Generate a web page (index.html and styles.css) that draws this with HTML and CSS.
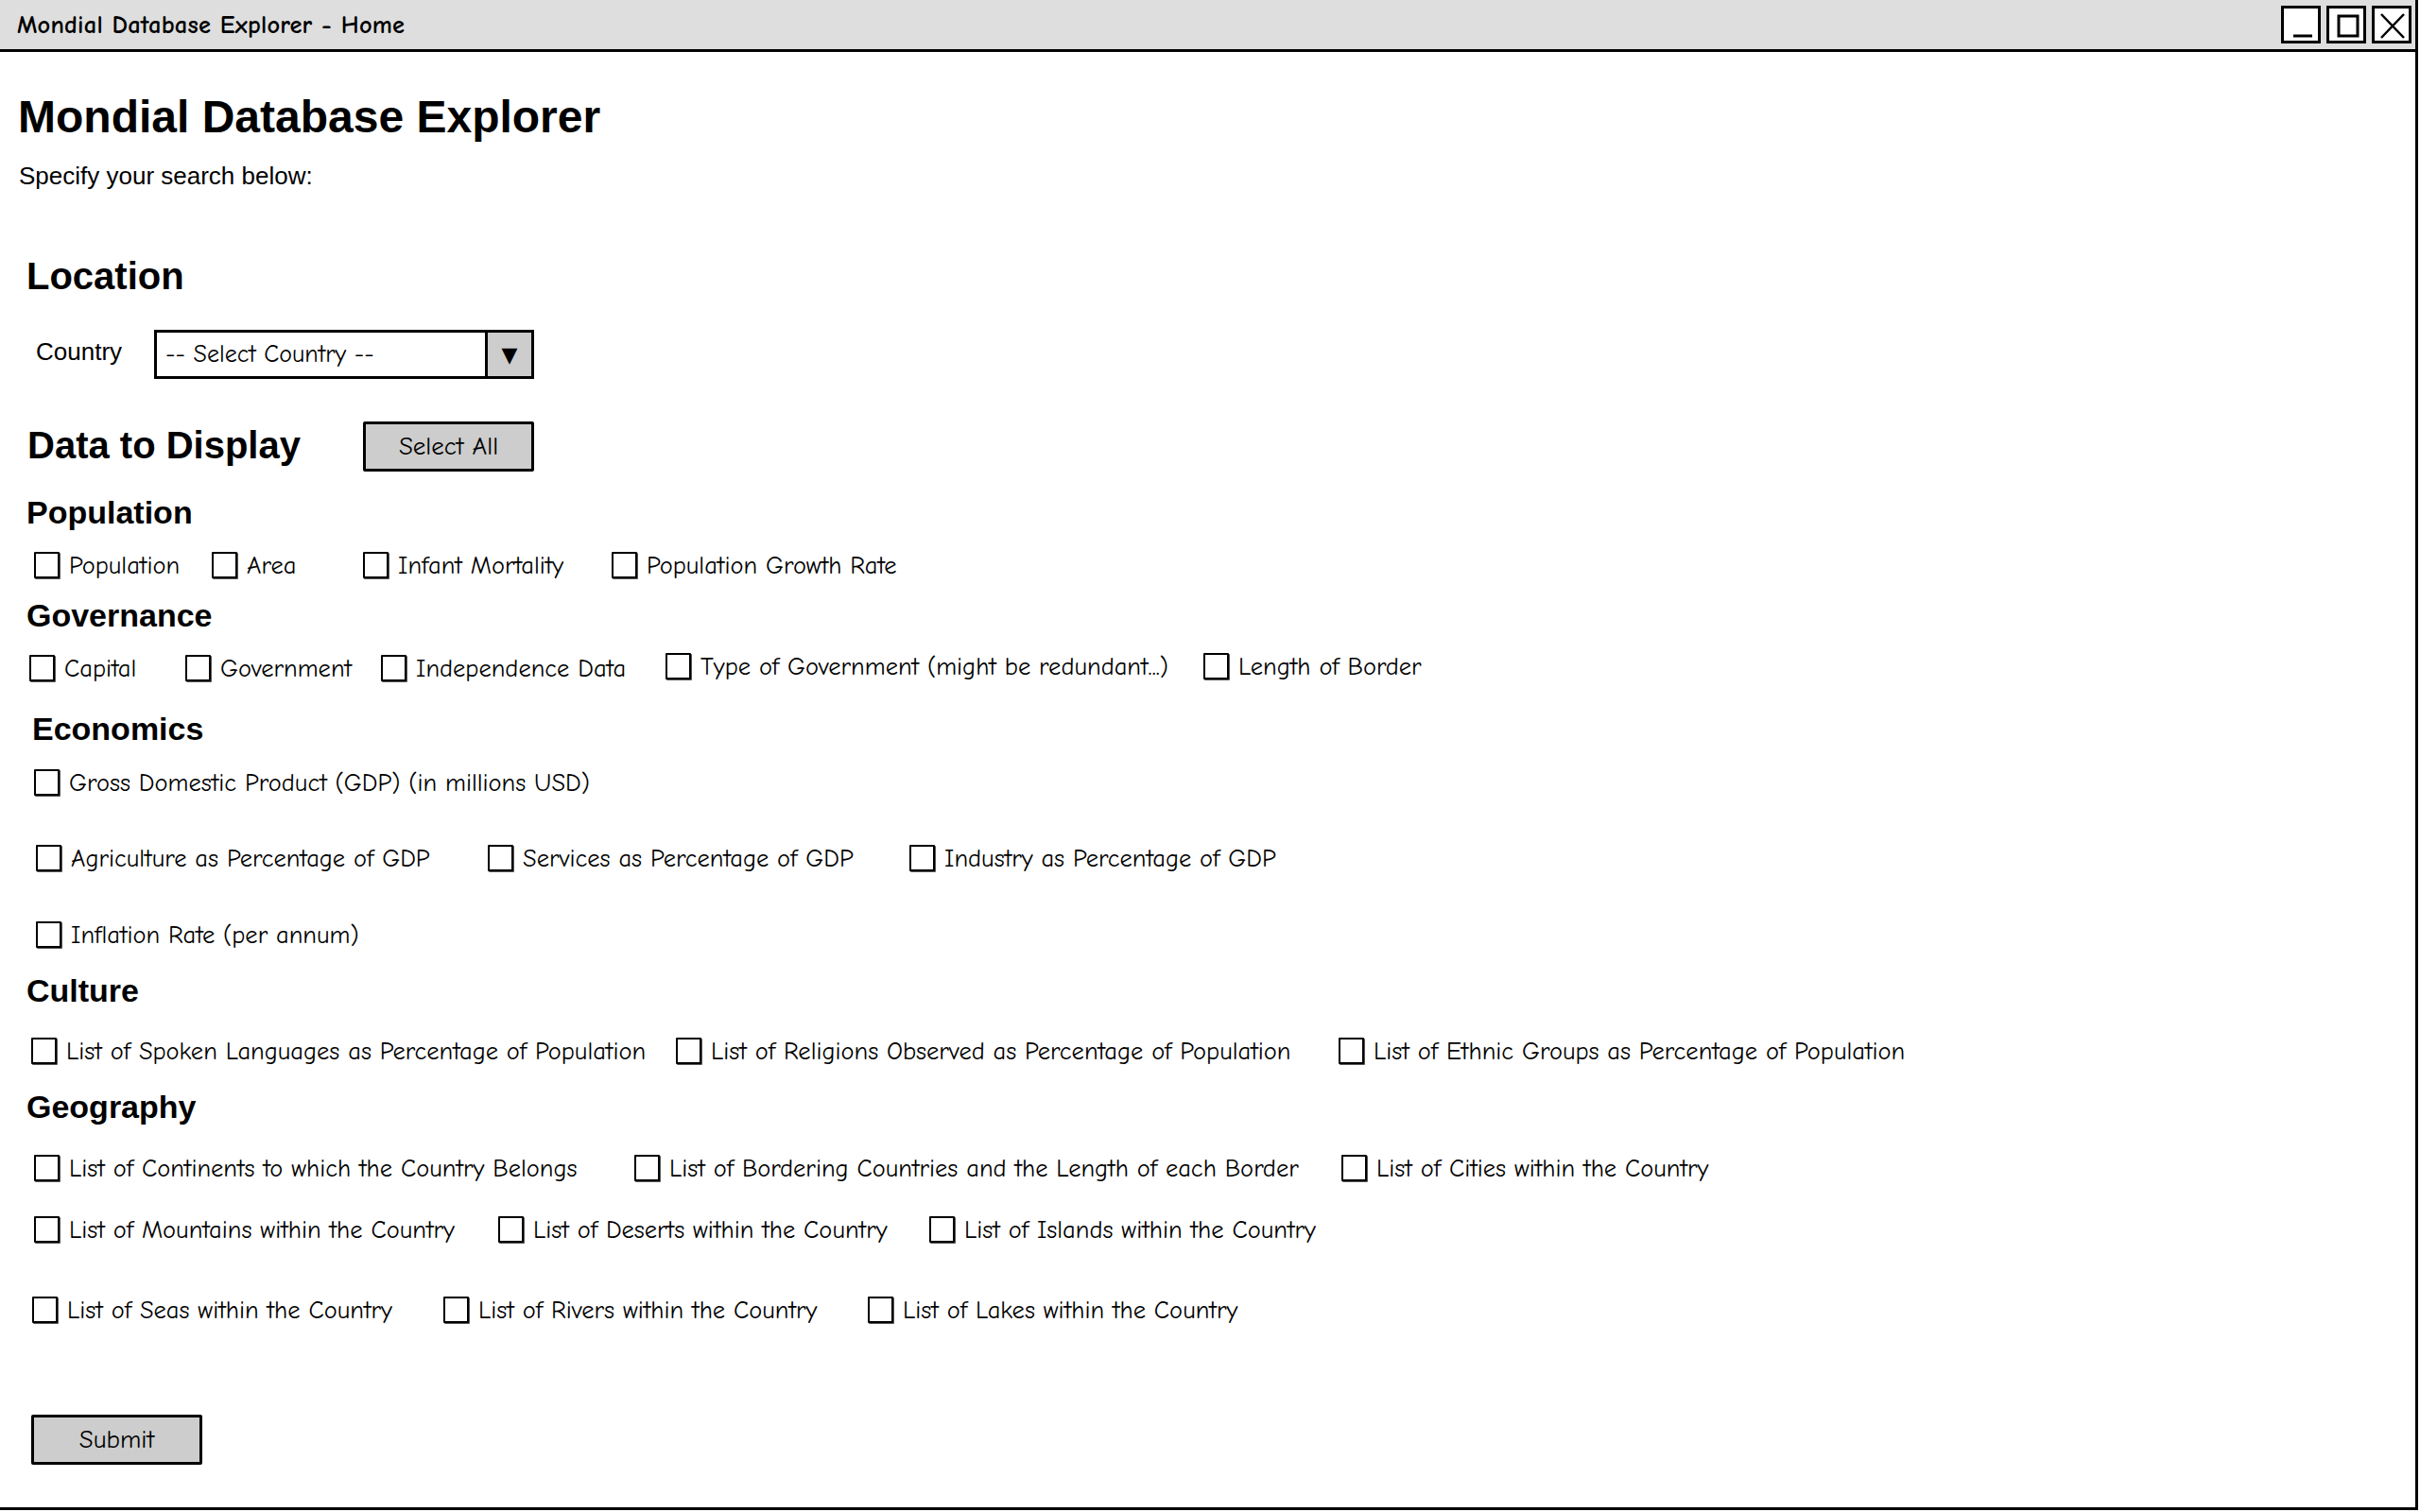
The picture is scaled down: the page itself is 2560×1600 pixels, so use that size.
FILE: index.html
```html
<!DOCTYPE html>
<html lang="en">
<head>
<meta charset="utf-8">
<title>Mondial Database Explorer - Home</title>
<link rel="stylesheet" href="styles.css">
</head>
<body>
<div class="window">
  <header class="titlebar">
    <span class="title">Mondial Database Explorer - Home</span>
    <div class="controls">
      <span class="ctl"><svg width="36" height="34" viewBox="0 0 36 34"><line x1="10" y1="29" x2="30" y2="29" stroke="#000" stroke-width="3"/></svg></span>
      <span class="ctl"><svg width="36" height="34" viewBox="0 0 36 34"><rect x="10" y="8" width="20" height="21" fill="none" stroke="#000" stroke-width="3"/></svg></span>
      <span class="ctl"><svg width="36" height="34" viewBox="0 0 36 34"><path d="M7 6 L31 31 M31 6 L7 31" stroke="#000" stroke-width="2.5" fill="none"/></svg></span>
    </div>
  </header>
  <main class="content">
    <h1 class="page-title">Mondial Database Explorer</h1>
    <p class="intro">Specify your search below:</p>

    <h2 class="section loc">Location</h2>
    <div class="country-row">
      <span class="field-label">Country</span>
      <div class="select">
        <span class="select-text">-- Select Country --</span>
        <span class="select-arrow">▼</span>
      </div>
    </div>

    <div class="data-row">
      <h2 class="section">Data to Display</h2>
      <button class="btn select-all">Select All</button>
    </div>

    <h3 class="cat m-pop">Population</h3>
    <div class="opts r-pop">
      <label class="opt"><span class="cb"></span>Population</label>
      <label class="opt"><span class="cb"></span>Area</label>
      <label class="opt"><span class="cb"></span>Infant Mortality</label>
      <label class="opt"><span class="cb"></span>Population Growth Rate</label>
    </div>

    <h3 class="cat m-gov">Governance</h3>
    <div class="opts r-gov">
      <label class="opt"><span class="cb"></span>Capital</label>
      <label class="opt"><span class="cb"></span>Government</label>
      <label class="opt"><span class="cb"></span>Independence Data</label>
      <label class="opt up"><span class="cb"></span>Type of Government (might be redundant...)</label>
      <label class="opt up"><span class="cb"></span>Length of Border</label>
    </div>

    <h3 class="cat econ m-econ">Economics</h3>
    <div class="opts r-gdp">
      <label class="opt"><span class="cb"></span>Gross Domestic Product (GDP) (in millions USD)</label>
    </div>
    <div class="opts r-agri">
      <label class="opt"><span class="cb"></span>Agriculture as Percentage of GDP</label>
      <label class="opt"><span class="cb"></span>Services as Percentage of GDP</label>
      <label class="opt"><span class="cb"></span>Industry as Percentage of GDP</label>
    </div>
    <div class="opts r-infl">
      <label class="opt"><span class="cb"></span>Inflation Rate (per annum)</label>
    </div>

    <h3 class="cat m-cult">Culture</h3>
    <div class="opts r-cult">
      <label class="opt"><span class="cb"></span>List of Spoken Languages as Percentage of Population</label>
      <label class="opt"><span class="cb"></span>List of Religions Observed as Percentage of Population</label>
      <label class="opt"><span class="cb"></span>List of Ethnic Groups as Percentage of Population</label>
    </div>

    <h3 class="cat m-geo">Geography</h3>
    <div class="opts r-geo1">
      <label class="opt"><span class="cb"></span>List of Continents to which the Country Belongs</label>
      <label class="opt"><span class="cb"></span>List of Bordering Countries and the Length of each Border</label>
      <label class="opt"><span class="cb"></span>List of Cities within the Country</label>
    </div>
    <div class="opts r-geo2">
      <label class="opt"><span class="cb"></span>List of Mountains within the Country</label>
      <label class="opt"><span class="cb"></span>List of Deserts within the Country</label>
      <label class="opt"><span class="cb"></span>List of Islands within the Country</label>
    </div>
    <div class="opts r-geo3">
      <label class="opt"><span class="cb"></span>List of Seas within the Country</label>
      <label class="opt"><span class="cb"></span>List of Rivers within the Country</label>
      <label class="opt"><span class="cb"></span>List of Lakes within the Country</label>
    </div>

    <div class="submit-row">
      <button class="btn submit">Submit</button>
    </div>
  </main>
</div>
</body>
</html>
```
FILE: styles.css
```css
:root {
  --hand: "Comic Sans MS", "Comic Neue", "Liberation Sans Narrow", "DejaVu Sans Condensed", sans-serif;
  --plain: "Liberation Sans", Arial, sans-serif;
}
* { box-sizing: border-box; }
html, body { margin: 0; padding: 0; background: #fff; }
body { width: 2560px; height: 1600px; overflow: hidden; color: #000; }

.window {
  width: 2558px;
  height: 1598px;
  border-right: 3px solid #000;
  border-bottom: 3px solid #000;
  display: flex;
  flex-direction: column;
}

.titlebar {
  height: 55px;
  flex: none;
  background: #dedede;
  border-bottom: 3px solid #000;
  display: flex;
  align-items: center;
  justify-content: space-between;
  padding: 0 4px 0 18px;
}
.title {
  font-family: var(--hand);
  font-weight: bold;
  font-size: 26.5px;
  letter-spacing: 0.2px;
}
.controls { display: flex; gap: 6px; align-self: flex-start; padding-top: 6px; }
.ctl {
  width: 42px;
  height: 40px;
  border: 3px solid #000;
  background: #fff;
  display: flex;
  align-items: center;
  justify-content: center;
}
.ctl svg { display: block; }

.content { display: flex; flex-direction: column; }

.page-title {
  margin: 39px 0 0;
  height: 60px;
  line-height: 60px;
  padding-left: 19px;
  font-family: var(--plain);
  font-weight: bold;
  font-size: 48px;
}
.intro {
  margin: 14px 0 0;
  height: 36px;
  line-height: 36px;
  padding-left: 20px;
  font-family: var(--plain);
  font-size: 26px;
}

.section {
  margin: 0;
  font-family: var(--plain);
  font-weight: bold;
  font-size: 40px;
  line-height: 50px;
}
.loc { margin-top: 63px; height: 50px; padding-left: 28px; }

.country-row {
  margin-top: 32px;
  height: 52px;
  display: flex;
  align-items: center;
  padding-left: 38px;
}
.field-label {
  font-family: var(--plain);
  font-size: 26px;
  width: 125px;
  position: relative;
  top: -3px;
}
.select {
  width: 402px;
  height: 52px;
  border: 3px solid #000;
  display: flex;
  align-items: stretch;
  background: #fff;
}
.select-text {
  flex: 1;
  display: flex;
  align-items: center;
  padding-left: 9px;
  font-family: var(--hand);
  font-size: 26px;
}
.select-arrow {
  width: 49px;
  border-left: 3px solid #000;
  background: #cdcdcd;
  display: flex;
  align-items: center;
  justify-content: center;
  font-size: 22px;
  font-family: "DejaVu Sans", sans-serif;
}

.data-row {
  margin-top: 45px;
  height: 52px;
  display: flex;
  align-items: center;
  padding-left: 29px;
}
.data-row .section { width: 355px; position: relative; top: -1px; }

.btn {
  font-family: var(--hand);
  font-size: 27px;
  color: #000;
  background: #cdcdcd;
  border: 3px solid #000;
  border-radius: 2px;
  padding: 0;
  width: 181px;
  height: 53px;
}

.cat {
  margin: 0;
  height: 40px;
  line-height: 40px;
  padding-left: 28px;
  font-family: var(--plain);
  font-weight: bold;
  font-size: 34px;
}
.cat.econ { padding-left: 34px; }
.m-pop { margin-top: 24px; }
.m-gov { margin-top: 13px; }
.m-econ { margin-top: 24px; }
.m-cult { margin-top: 19px; }
.m-geo { margin-top: 19px; }

.opts {
  display: grid;
  height: 40px;
  align-items: center;
}
.opt {
  display: flex;
  align-items: center;
  gap: 10px;
  font-family: var(--hand);
  font-size: 26.5px;
  white-space: nowrap;
}
.opt.up { position: relative; top: -2px; }
.cb {
  width: 27px;
  height: 28px;
  border: 2px solid #000;
  border-radius: 1px;
  background: #fff;
  box-shadow: 1px 1px 0 #555;
  flex: none;
}

.r-pop { margin-top: 16px; padding-left: 36px; grid-template-columns: 188px 160px 263px auto; }
.r-gov { margin-top: 16px; padding-left: 31px; grid-template-columns: 165px 207px 301px 569px auto; }
.r-gdp { margin-top: 17px; padding-left: 36px; grid-template-columns: auto; }
.r-agri { margin-top: 40px; padding-left: 38px; grid-template-columns: 478px 446px auto; }
.r-infl { margin-top: 41px; padding-left: 38px; grid-template-columns: auto; }
.r-cult { margin-top: 24px; padding-left: 33px; grid-template-columns: 682px 701px auto; }
.r-geo1 { margin-top: 25px; padding-left: 36px; grid-template-columns: 635px 748px auto; }
.r-geo2 { margin-top: 25px; padding-left: 36px; grid-template-columns: 491px 456px auto; }
.r-geo3 { margin-top: 45px; padding-left: 34px; grid-template-columns: 435px 449px auto; }

.submit-row { margin-top: 91px; padding-left: 33px; }
```
